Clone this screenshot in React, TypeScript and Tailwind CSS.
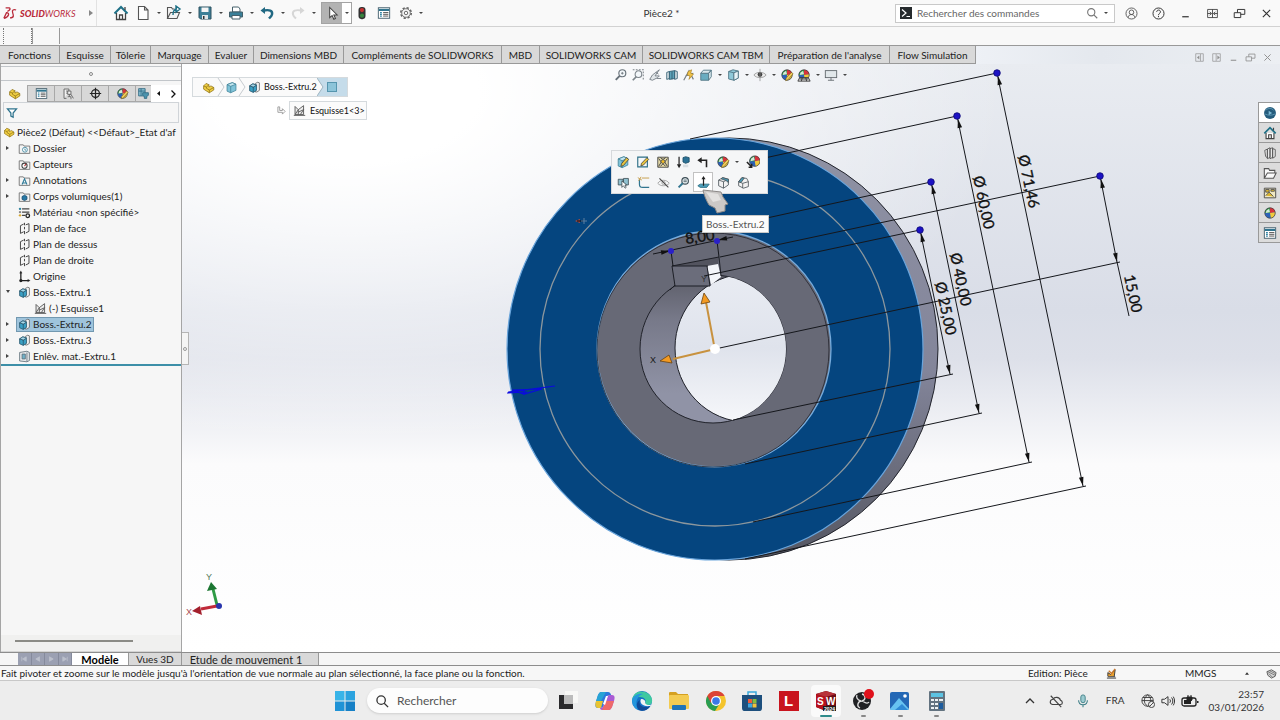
import React from "react";

type IconProps = { name: string; className?: string };

const sphere = (
  <g>
    <circle cx="8" cy="8" r="6" fill="#2c62b8" />
    <path d="M8 8V2a6 6 0 0 0-6 6z" fill="#2d8f3c" />
    <path d="M8 8V2a6 6 0 0 1 6 5z" fill="#d8323a" />
    <path d="M8 8l6-1a6 6 0 0 1-5 7z" fill="#f1c93b" />
    <path d="M4 5l3-2 1 4-5 1z" fill="#fff" opacity=".8" />
    <circle cx="8" cy="8" r="6" fill="none" stroke="#444" strokeWidth=".8" />
  </g>
);

const extrude = (
  <g stroke="#2b5a70" strokeWidth="1">
    <path d="M9 3l3-1.500 2 .8v9.200l-3 2H9z" fill="#f2f2f2" stroke="#666" />
    <path d="M2 6l4-2.500 4.500 1.500v6.500L6.500 14 2 12z" fill="#3aa0c4" />
    <path d="M2 6l4.500 1.500L10.500 5M6.500 7.500V14" fill="none" />
    <path d="M2 6l4-2.500 4.500 1.500-4 2.500z" fill="#a7d8e8" />
  </g>
);

const part = (
  <g stroke="#8a6d10" strokeWidth=".9">
    <path d="M2 6l3-3 3.500 1.500v3L11 6l3.500 2v3L9 14.500 2 10z" fill="#f0cf45" />
    <path d="M2 6l3.500 1.500L8.500 4.500M5.500 7.500V9l3.500 2 5.500-3M9 11v3.500" fill="none" />
  </g>
);

const cube = (
  <g stroke="#3d7f95" strokeWidth=".9">
    <path d="M2.500 4.500L9 2l4.500 2v7.500L7 14.500l-4.500-2z" fill="#7fc3d8" />
    <path d="M2.500 4.500L7 6.500 13.500 4 9 2z" fill="#c4e6ef" />
    <path d="M7 6.500v8" />
  </g>
);

const sketch = (
  <g fill="none" stroke="#555" strokeWidth="1.100">
    <path d="M2.500 13V3l4 4L13 2v11z" fill="#ececec" />
    <path d="M2.500 13l4-6v6M6.500 10l6.500-3M9 13l4-6M1 14h14" />
  </g>
);

const folder = <path d="M1.500 3.500h5l1 1.500h7v9h-13z" fill="#f4f4f4" stroke="#666" />;

const plane = <path d="M7 2.500l-4 2v9.500l4-2M9.500 3.500l4-1.500v9.500l-4 2M8 1v3M8 6v3M8 11v4" fill="none" stroke="#444" strokeWidth="1.200" />;

const listIcon = (
  <g>
    <rect x="1.500" y="2" width="13" height="12" fill="#fff" stroke="#3c5866" />
    <path d="M2 4.500h12" stroke="#31758f" strokeWidth="2.500" />
    <path d="M3.500 7.500h2M3.500 9.500h2M3.500 11.500h2" stroke="#2a7fa0" strokeWidth="1.300" />
    <path d="M7 7.500h6M7 9.500h6M7 11.500h6" stroke="#444" />
  </g>
);

const house = (
  <g strokeWidth="1.300">
    <path d="M3.500 8v6.500h9V8" fill="#fff" stroke="#444" />
    <path d="M1.500 8.500L8 2l6.500 6.500" fill="none" stroke="#1f7187" strokeWidth="2" />
    <path d="M6.500 14.500V10h3v4.500M12 2v3" fill="none" stroke="#444" />
  </g>
);

const drawings: Record<string, React.ReactNode> = {
  house,
  list: listIcon,
  sphere,
  extrude,
  part,
  cube,
  sketch,
  plane,
  newDoc: <path d="M3.500 1.500h6l3.500 3.500v9.500H3.500zM9.500 1.500V5H13" fill="#fff" stroke="#555" strokeWidth="1.100" />,
  open: (
    <g fill="#f4f4f4" stroke="#555" strokeWidth="1.100">
      <path d="M1.500 13.500v-11h4l1 1.500h2M1.500 13.500l3-6h9l-2.500 6z" />
      <path d="M7 10c0-4 1-6 4-6m-1-3l4 3-4 3z" fill="none" stroke="#1f7187" strokeWidth="1.400" />
    </g>
  ),
  save: (
    <g>
      <path d="M2 2h12v12H3.500L2 12.500z" fill="#3c7f97" stroke="#2e5361" />
      <path d="M4.500 2.500h7V7h-7z" fill="#f5f5f5" />
      <path d="M5 10h6v4H5z" fill="#dfe5e8" />
      <path d="M6 11h1.500v3H6z" fill="#333" />
    </g>
  ),
  print: (
    <g stroke="#45606b">
      <path d="M4.500 7V2h6L12 4v3z" fill="#fff" />
      <path d="M1.500 7h13v5h-13z" fill="#398099" />
      <path d="M4 10.500h8V14H4z" fill="#fff" />
    </g>
  ),
  undo: (
    <g>
      <path d="M1.500 5.500L6 2v7z" fill="#226983" />
      <path d="M5 5.500c5-1 9 0 8 4-.5 2-2 3-3 4" fill="none" stroke="#226983" strokeWidth="2.400" />
    </g>
  ),
  redo: (
    <g>
      <path d="M14.500 5.500L10 2v7z" fill="#d6d6d6" />
      <path d="M11 5.500c-5-1-9 0-8 4 .5 2 2 3 3 4" fill="none" stroke="#d6d6d6" strokeWidth="2" />
    </g>
  ),
  arrow: <path d="M5 1.500v11l2.600-2.300 1.800 4 1.800-.9-1.800-3.800H13z" fill="#fff" stroke="#444" strokeWidth="1.100" />,
  light: (
    <g>
      <rect x="4" y="1" width="8" height="14" rx="3.500" fill="#333" />
      <circle cx="8" cy="4.700" r="2.400" fill="#c93232" />
      <circle cx="8" cy="11" r="2.400" fill="#37843d" />
    </g>
  ),
  gear: (
    <g fill="none" stroke="#666">
      <circle cx="8" cy="8" r="6" strokeWidth="1.800" strokeDasharray="2.600 2.100" />
      <circle cx="8" cy="8" r="4.900" strokeWidth="1" />
      <circle cx="8" cy="8" r="2" strokeWidth="1.100" />
    </g>
  ),
  config: (
    <g fill="#f2f2f2" stroke="#555">
      <path d="M2.500 14V2.500h6v3M2.500 14h3M5 5h3M5 7.500h2" />
      <path d="M7 5h4v4H7zM9 9v3M7 12h4v3M11 9l3 5" />
    </g>
  ),
  target: (
    <g fill="none" stroke="#222" strokeWidth="1.500">
      <circle cx="8" cy="8" r="4.800" />
      <path d="M8 1v14M1 8h14" />
    </g>
  ),
  cam: (
    <g stroke="#2d6880" fill="#86bdd0">
      <path d="M2 2h8v9H2zM2 5h8M5 2v9" />
      <path d="M7 7h7v3l-2 2v2H9v-2L7 10z" fill="#4c93ad" />
    </g>
  ),
  filter: <path d="M2 2.500h12L9.500 8v5.500l-3-1.500V8z" fill="#fff" stroke="#31758f" strokeWidth="1.700" />,
  history: (
    <g>
      {folder}
      <circle cx="8.500" cy="9.500" r="3" fill="#fff" stroke="#35809a" />
      <path d="M8.500 8v2H10" fill="none" stroke="#35809a" />
    </g>
  ),
  sensor: (
    <g>
      {folder}
      <circle cx="8" cy="9.500" r="3.200" fill="#fff" stroke="#444" strokeWidth="1.300" />
      <path d="M8 10l2-3" stroke="#b03030" strokeWidth="1.300" />
    </g>
  ),
  note: (
    <g>
      {folder}
      <path d="M5 13l3-7 3 7M6 11h4" fill="none" stroke="#2a7896" strokeWidth="1.300" />
    </g>
  ),
  bodies: (
    <g>
      {folder}
      <path d="M5 8l3-1.500L11 8v3.500L8 13l-3-1.500z" fill="#2879a5" stroke="#174b70" />
    </g>
  ),
  material: (
    <g>
      <path d="M5 3.500h9M5 7.500h9M5 11.500h4" stroke="#444" strokeWidth="1.500" />
      <circle cx="2.500" cy="3.500" r="1.500" fill="#3185a0" />
      <circle cx="2.500" cy="7.500" r="1.500" fill="#888" />
      <circle cx="2.500" cy="11.500" r="1.500" fill="#d7a72f" />
      <circle cx="12" cy="12" r="2.200" fill="none" stroke="#222" strokeWidth="1.600" />
    </g>
  ),
  origin: (
    <g fill="#222" stroke="#222" strokeWidth="1.600">
      <path d="M3.500 3v10H13" fill="none" />
      <path d="M3.500 1L5 4H2zM15 13l-3-1.500v3z" strokeWidth=".3" />
      <circle cx="3.500" cy="13" r="1.200" />
    </g>
  ),
  cut: (
    <g stroke="#5d6d76">
      <path d="M2 3l9-1.500 3 1.500v10l-3 1.500-9-1z" fill="#e6e9eb" />
      <path d="M11 3v11M5 5h4v6H5z" fill="#6fb2c9" />
    </g>
  ),
  zoomFit: (
    <g fill="none" stroke="#667078" strokeWidth="1.300">
      <circle cx="9.500" cy="6" r="4" fill="#f3f7fa" />
      <path d="M6.500 9L2 13.500" strokeWidth="2.200" />
      <path d="M8 6h3M9.500 4.500v3" strokeWidth=".9" />
    </g>
  ),
  zoomArea: (
    <g fill="none" stroke="#7c848a" strokeWidth="1.200">
      <path d="M2 2h12v12" strokeDasharray="2 1.500" />
      <circle cx="8.500" cy="7" r="3.800" fill="#f3f7fa" />
      <path d="M6 10l-4 4" strokeWidth="2" />
    </g>
  ),
  prev: <path d="M13 2L5 8l-3 5 3 1 6-3 2-2H8zM10 12h5M9 5l3 2" fill="#e1e6e9" stroke="#727b82" />,
  section: (
    <g stroke="#315d70">
      <path d="M2 5l3-1v8l-3 1zM11 3l3 1v8l-3 1z" fill="#dfe7eb" />
      <path d="M5 4l6-1v9l-6 1z" fill="#5ea4ba" />
      <path d="M8 4v9" />
    </g>
  ),
  annot: (
    <g strokeWidth="1.300" fill="none">
      <path d="M2 14L8 3l5 10M4 9l9-3" stroke="#747c82" />
      <path d="M7 4l4-2-1 4 3 1-5 6 1-4-3-1z" fill="#efc34b" stroke="#a47c1c" strokeWidth=".7" />
    </g>
  ),
  orient: (
    <g stroke="#4f7583">
      <path d="M2 6h9v8H2z" fill="#69acc0" />
      <path d="M2 6l3-3.500h9L11 6zM11 6l3-3.500V10l-3 4z" fill="#dbe9ee" />
    </g>
  ),
  style: (
    <g stroke="#4f7583">
      <path d="M3 4l5-2 6 1.500v8L9 14l-6-1.500z" fill="#8fc9d9" />
      <path d="M3 4l6 1.500V14M9 5.500l5-2" fill="none" />
      <path d="M9 5.500l5-2v8L9 14z" fill="#e7f3f7" />
    </g>
  ),
  eye: (
    <g>
      <path d="M1 8c3-4 11-4 14 0-3 4-11 4-14 0z" fill="#eee" stroke="#999" />
      <circle cx="8" cy="7.500" r="2.700" fill="#444" />
      <path d="M8 1v14" stroke="#888" strokeWidth=".8" />
    </g>
  ),
  appearance: (
    <g>
      {sphere}
      <path d="M13 5l2 1.500-6 7-2.500 1 .5-3z" fill="#f0cd5d" stroke="#765d19" strokeWidth=".7" />
    </g>
  ),
  scene: (
    <g>
      {sphere}
      <path d="M1 15l2-4h10l2 4z" fill="#d9d9d9" stroke="#333" />
      <path d="M3 12.500h10M6 11l-1 4M10 11l1 4" stroke="#333" />
    </g>
  ),
  screen: (
    <g stroke="#5f666a">
      <rect x="1.500" y="3" width="13" height="8" fill="#e1e7ea" />
      <path d="M8 11v3M4.500 14h7" />
    </g>
  ),
  editFeature: (
    <g>
      {cube}
      <path d="M12 3l2.500 2-6 7-3 1 .8-3z" fill="#e8c33e" stroke="#333" strokeWidth=".8" />
    </g>
  ),
  editSketch: (
    <g>
      <path d="M2 2.500h11v11H2z" fill="#f4f7f8" stroke="#2c6f87" strokeWidth="1.300" />
      <path d="M12.500 3l2 2-6 6.500-3 1 .8-3z" fill="#e8c33e" stroke="#333" strokeWidth=".8" />
    </g>
  ),
  suppress: (
    <g>
      <path d="M2 2.500h12v11.500H2z" fill="#e7dba8" stroke="#444" />
      <path d="M3 4l3 4-3 5M13 4l-3 4 3 5M5 3l3 2 3-2M5 13l3-3 3 3" fill="none" stroke="#444" strokeWidth="1.100" />
      <circle cx="8" cy="7.500" r="2.200" fill="#f2bd24" stroke="#555" />
    </g>
  ),
  down: (
    <g>
      <path d="M3.500 2v9" stroke="#222" strokeWidth="1.400" />
      <path d="M1 10.500h5L3.500 15z" fill="#222" />
      <path d="M8 3l3-1 4 1v5l-4 1.500L8 8z" fill="#2b7195" stroke="#1d4f69" />
      <path d="M8 11h6v3H8z" fill="#d8dee2" />
    </g>
  ),
  back: (
    <g>
      <path d="M5 6h7v8" fill="none" stroke="#222" strokeWidth="1.800" />
      <path d="M1.500 6L6.500 2.500v7z" fill="#222" />
    </g>
  ),
  copyLook: (
    <g>
      <g transform="translate(2 -1)">{sphere}</g>
      <path d="M1 8l5 5M6.500 10v4H3" stroke="#222" fill="none" strokeWidth="1.700" />
    </g>
  ),
  pick: (
    <g stroke="#3e4d54">
      <path d="M1.500 4h6v7h-6zM8 3h6v8H8z" fill="#8fc1d0" />
      <path d="M6 6v8l2-2 2 3 1.300-1-1.500-3H12z" fill="#fff" />
    </g>
  ),
  fillet: (
    <g fill="none">
      <path d="M3 4v6c0 3 2 4 4 4h8" stroke="#31758f" strokeWidth="1.500" />
      <path d="M1 2l5 3M5 1L2 6M6 2.500h9" stroke="#c9a050" strokeWidth="1.200" />
    </g>
  ),
  hide: (
    <g fill="none" stroke="#9a9a9a">
      <path d="M1 9c3-5 11-5 14 0-3 4-11 4-14 0z" />
      <circle cx="8" cy="8.500" r="2" />
      <path d="M3 3l11 11" stroke="#444" strokeWidth="1.300" />
    </g>
  ),
  zoomSel: (
    <g fill="none" stroke="#3b4b53" strokeWidth="1.400">
      <circle cx="10" cy="6" r="4" fill="#eef7fa" />
      <path d="M7 9l-5 5" stroke="#31758f" strokeWidth="2.400" />
      <path d="M8 5h4M8 7h4" strokeWidth="1" />
    </g>
  ),
  normal: (
    <g>
      <path d="M1 12l3-2h11l-3 4H4z" fill="#4c9fba" stroke="#266a80" />
      <path d="M8 12V3" stroke="#222" strokeWidth="1.500" />
      <path d="M8 0l2.500 4h-5z" fill="#222" />
    </g>
  ),
  box1: (
    <g stroke="#4a5357">
      <path d="M2 5l5-3 7 2v7l-6 4-6-3z" fill="#f2f2f2" />
      <path d="M2 5l6 2 6-3M8 7v8" fill="none" />
      <path d="M5 3.500L7 2l7 2v4l-3-2.500z" fill="#4b9db9" />
    </g>
  ),
  box2: (
    <g stroke="#4a5357">
      <path d="M2 7l4-5 6 1 2 4v6l-6 2-6-3z" fill="#f2f2f2" />
      <path d="M2 7l5 2 7-2M7 9v6" fill="none" />
      <path d="M6 2L2 7l3 1 4-5.500z" fill="#4b9db9" />
    </g>
  ),
  globe: (
    <g>
      <circle cx="8" cy="8" r="6.800" fill="#255c7c" />
      <path d="M3 5c3-3 7-3 9 0M2 9c4 2 8 2 12 0" fill="none" stroke="#6ba6c4" strokeWidth=".8" />
      <path d="M6.500 5.500l4 2.500-4 2.500z" fill="#7fbbd6" />
    </g>
  ),
  books: (
    <g fill="#e9e9e9" stroke="#555">
      <path d="M2 5l3-1.500v10L3 12zM5 3.500L8 2v11l-3 1.500zM8 3l3-1v11l-3 1.500zM11 3l3 1v8l-3 2z" />
    </g>
  ),
  folderOpen: <path d="M1.500 14V3h5l1 2h6v3M1.500 14l3.500-6h10l-3 6z" fill="#fafafa" stroke="#555" strokeWidth="1.200" />,
  palette: (
    <g>
      <path d="M1.500 2.500h13v11h-13z" fill="#efe8c2" stroke="#444" />
      <path d="M3 4h4v3H3zM9 4h4v2H9zM3 11l4-4 5 5" fill="#d9b32e" stroke="#555" />
    </g>
  ),
  user: (
    <g fill="none" stroke="#444">
      <circle cx="8" cy="8" r="6.800" />
      <circle cx="8" cy="6.500" r="2.800" />
      <path d="M4 13c0-5 8-5 8 0" />
    </g>
  ),
  help: (
    <g fill="none" stroke="#333" strokeWidth="1.200">
      <circle cx="8" cy="8" r="6.800" />
      <path d="M5.800 6c0-3 4.600-3 4.600 0 0 2-2.400 1.800-2.400 4M8 11v1.500" />
    </g>
  ),
  min: <path d="M4 12h8" stroke="currentColor" strokeWidth="1.500" />,
  span: <path d="M2 3h12v10H2zM8 3v10M2 8h4M10 8h4M4.500 6L7 8l-2.500 2M11.500 6L9 8l2.500 2" fill="none" stroke="currentColor" />,
  restore: <path d="M1.500 7h8v6h-8zM5.500 7V3h9v6h-5" fill="none" stroke="currentColor" strokeWidth="1.200" />,
  close: <path d="M3.500 3.500l9 9M12.500 3.500l-9 9" stroke="currentColor" strokeWidth="1.400" />,
  dockL: (
    <g fill="none" stroke="currentColor">
      <path d="M2.500 2.500h11v11h-11zM9.500 3v10" />
      <path d="M7.500 5.500v5L4.500 8z" fill="currentColor" strokeWidth=".5" />
    </g>
  ),
  dockR: (
    <g fill="none" stroke="currentColor">
      <path d="M2.500 2.500h11v11h-11zM7.500 3v10" />
      <path d="M9.500 5.500v5l3-2.500z" fill="currentColor" strokeWidth=".5" />
    </g>
  ),
  search: (
    <g fill="none" stroke="currentColor" strokeWidth="1.500">
      <circle cx="7" cy="7" r="4.800" />
      <path d="M10.500 10.500L15 15" />
    </g>
  ),
};

function Icon({ name, className = "size-4" }: IconProps) {
  return (
    <svg viewBox="0 0 16 16" className={`${className} shrink-0`} aria-hidden="true">
      {drawings[name]}
    </svg>
  );
}

function Caret({ className = "w-[15px]" }: { className?: string }) {
  return (
    <span className={`flex items-center justify-center ${className}`}>
      <svg viewBox="0 0 4 2" className="h-[2px] w-1" aria-hidden="true">
        <path d="M0 0h4L2 2z" fill="#444" />
      </svg>
    </span>
  );
}

function TitleBar() {
  const menus: [string, string][] = [
    ["newDoc", "Nouveau"],
    ["open", "Ouvrir"],
    ["save", "Enregistrer"],
    ["print", "Imprimer"],
    ["undo", "Annuler"],
    ["redo", "Rétablir"],
  ];
  const win: [string, string][] = [
    ["user", "Connexion"],
    ["help", "Aide"],
    ["min", "Réduire"],
    ["span", "Étendre"],
    ["restore", "Restaurer"],
    ["close", "Fermer"],
  ];
  return (
    <header className="flex h-[27px] shrink-0 items-center border-b border-[#d2d2d2] bg-[#f9f9f9]">
      <div className="flex w-[97px] items-center self-stretch border-r border-[#e2e2e2] pl-[3px] text-[#b92b3b]">
        <svg viewBox="0 0 16 16" className="h-[15px] w-[14px]" aria-hidden="true">
          <path d="M3 1.500h4c2 .5 1 3-2 4M1 13.500L4 7c4 0 3 5-3 6.500M15 4c-3-1-5 0-4 3s2 6-3 6" fill="none" stroke="currentColor" strokeWidth="1.500" />
        </svg>
        <span className="ml-[3px] text-[9px] italic leading-none">
          <b className="font-black">SOLID</b>WORKS
        </span>
        <svg viewBox="0 0 4 6" className="ml-auto mr-[3px] h-[6px] w-1" aria-hidden="true">
          <path d="M0 0v6l4-3z" fill="#888" />
        </svg>
      </div>
      <nav className="flex items-center pl-4" aria-label="Accès rapide">
        <button aria-label="Accueil" className="mr-[6px] flex">
          <Icon name="house" />
        </button>
        {menus.map(([icon, label]) => (
          <button key={icon} aria-label={label} className="flex">
            <Icon name={icon} />
            <Caret />
          </button>
        ))}
        <button aria-label="Sélectionner" className="flex h-[22px] border border-[#a3a3a3] bg-white">
          <span className="flex w-5 items-center justify-center bg-[#b3b3b3]">
            <Icon name="arrow" className="size-[15px]" />
          </span>
          <Caret className="w-[9px]" />
        </button>
        <button aria-label="Reconstruire" className="ml-[3px]">
          <Icon name="light" className="size-[14px]" />
        </button>
        <button aria-label="Propriétés" className="ml-2">
          <Icon name="list" className="size-[14px]" />
        </button>
        <button aria-label="Options" className="ml-2 flex">
          <Icon name="gear" className="size-[14px]" />
          <Caret />
        </button>
      </nav>
      <h1 className="flex-1 text-center text-[10px] text-[#333]">Pièce2 *</h1>
      <label className="flex h-[19px] w-[220px] items-center border border-[#c9c9c9] bg-white pl-1">
        <svg viewBox="0 0 12 12" className="size-3" aria-hidden="true">
          <rect width="12" height="12" fill="#262b2e" />
          <path d="M2 2.500L6 6 2 9.500M6.500 9.500H10" fill="none" stroke="#fff" strokeWidth="1.200" />
        </svg>
        <input
          aria-label="Rechercher des commandes"
          placeholder="Rechercher des commandes"
          className="ml-[5px] min-w-0 flex-1 bg-transparent text-[10px] outline-none placeholder:text-[#666]"
        />
        <span className="text-[#777]">
          <Icon name="search" className="size-3" />
        </span>
        <Caret className="w-4" />
      </label>
      <div className="flex pl-[3px] text-[#333]">
        {win.map(([icon, label]) => (
          <button key={icon} aria-label={label} className="flex w-[27px] justify-center">
            <Icon name={icon} className="size-[13px]" />
          </button>
        ))}
      </div>
    </header>
  );
}

function RibbonTabs() {
  const tabs: [string, string][] = [
    ["Fonctions", "w-[60px]"],
    ["Esquisse", "w-[51px]"],
    ["Tôlerie", "w-[40px]"],
    ["Marquage", "w-[58px]"],
    ["Evaluer", "w-[45px]"],
    ["Dimensions MBD", "w-[90px]"],
    ["Compléments de SOLIDWORKS", "w-[158px]"],
    ["MBD", "w-[38px]"],
    ["SOLIDWORKS CAM", "w-[103px]"],
    ["SOLIDWORKS CAM TBM", "w-[127px]"],
    ["Préparation de l'analyse", "w-[120px]"],
    ["Flow Simulation", "w-[86px]"],
  ];
  const controls: [string, string][] = [
    ["dockL", "Volet gauche"],
    ["dockR", "Volet droit"],
    ["min", "Réduire le document"],
    ["restore", "Restaurer le document"],
    ["close", "Fermer le document"],
  ];
  return (
    <div className="flex h-[19px] shrink-0 border-t border-[#999] bg-[linear-gradient(90deg,#eef1f6_76%,#e4e8ee_86%,#eceff3)]">
      {tabs.map(([label, width]) => (
        <button key={label} className={`${width} h-[18px] shrink-0 whitespace-nowrap border-b border-r border-[#999] bg-[#d9d9d9] text-[10px] leading-none text-[#222]`}>
          {label}
        </button>
      ))}
      <div className="ml-auto flex items-center pr-1 pt-1 text-[#8f8f8f]">
        {controls.map(([icon, label]) => (
          <button key={icon} aria-label={label} className="flex w-[17px] justify-center">
            <Icon name={icon} className="size-[11px]" />
          </button>
        ))}
      </div>
    </div>
  );
}

type Node = { icon: string; label: string; arrow?: "right" | "down"; nested?: boolean; selected?: boolean };

const tree: Node[] = [
  { icon: "history", label: "Dossier", arrow: "right" },
  { icon: "sensor", label: "Capteurs" },
  { icon: "note", label: "Annotations", arrow: "right" },
  { icon: "bodies", label: "Corps volumiques(1)", arrow: "right" },
  { icon: "material", label: "Matériau <non spécifié>" },
  { icon: "plane", label: "Plan de face" },
  { icon: "plane", label: "Plan de dessus" },
  { icon: "plane", label: "Plan de droite" },
  { icon: "origin", label: "Origine" },
  { icon: "extrude", label: "Boss.-Extru.1", arrow: "down" },
  { icon: "sketch", label: "(-) Esquisse1", nested: true },
  { icon: "extrude", label: "Boss.-Extru.2", arrow: "right", selected: true },
  { icon: "extrude", label: "Boss.-Extru.3", arrow: "right" },
  { icon: "cut", label: "Enlèv. mat.-Extru.1", arrow: "right" },
];

function FeaturePanel() {
  const tabs = ["part", "list", "config", "target", "appearance"];
  const names = ["Arbre", "Propriétés", "Configurations", "Cotes", "Apparences"];
  return (
    <aside className="flex w-[182px] shrink-0 flex-col border-l border-r border-[#a5a5a5] bg-[#f6f6f6]">
      <div className="mt-[2px] flex h-[15px] items-center justify-center border-b border-t border-[#c2c6ca]">
        <span className="size-1 rounded-full border border-[#888]" />
      </div>
      <div className="mt-1 flex h-[17px]">
        {tabs.map((icon, i) => (
          <button
            key={icon}
            aria-label={names[i]}
            className={`flex w-[27px] shrink-0 items-center justify-center border-r border-[#a8a8a8] ${i === 0 ? "" : "border-b border-t bg-[#d8d8d8]"}`}
          >
            <Icon name={icon} className="size-[13px]" />
          </button>
        ))}
        <button aria-label="CAM" className="flex w-[15px] shrink-0 items-center justify-center overflow-hidden border-b border-t border-[#a8a8a8] bg-[#d8d8d8]">
          <Icon name="cam" className="size-[13px]" />
        </button>
        <button aria-label="Onglets précédents" className="flex flex-1 items-center justify-center bg-white">
          <svg viewBox="0 0 3 5" className="h-[5px] w-[3px]" aria-hidden="true">
            <path d="M3 0v5L0 2.500z" fill="#111" />
          </svg>
        </button>
        <button aria-label="Onglets suivants" className="flex flex-1 items-center justify-center bg-white">
          <svg viewBox="0 0 5 8" className="h-2 w-[5px]" aria-hidden="true">
            <path d="M.5.500L4 4 .5 7.500" fill="none" stroke="#111" strokeWidth="1.300" />
          </svg>
        </button>
      </div>
      <label className="mx-[2px] flex h-[21px] items-center border border-[#d0d4d8] pl-[2px]">
        <Icon name="filter" className="size-3" />
        <input aria-label="Filtrer l'arbre" className="min-w-0 flex-1 bg-transparent text-[10px] outline-none" />
      </label>
      <div className="pt-px text-[10px] text-[#222]">
        <button className="flex h-4 items-center whitespace-nowrap pl-[2px]">
          <Icon name="part" className="mr-[2px] size-3" />
          Pièce2 (Défaut) &lt;&lt;Défaut&gt;_Etat d'af
        </button>
        <ul>
          {tree.map((n) => (
            <li key={n.label} className={`flex h-4 items-center ${n.nested ? "pl-4" : ""}`}>
              <span className="flex w-[15px] pl-[5px]">
                {n.arrow && (
                  <svg viewBox="0 0 4 4" className="size-1" aria-hidden="true">
                    <path d={n.arrow === "right" ? "M0 0v4l3-2z" : "M0 0h4L2 3z"} fill="#444" />
                  </svg>
                )}
              </span>
              <button
                className={`flex h-[15px] items-center gap-[2px] whitespace-nowrap border px-px ${n.selected ? "border-[#7298b0] bg-[#9fc4dc]" : "border-transparent"}`}
              >
                <Icon name={n.icon} className="size-[13px]" />
                {n.label}
              </button>
            </li>
          ))}
        </ul>
      </div>
      <div className="h-[2px] w-full bg-[#3d8fa8]" />
      <div className="mt-auto border-b border-[#d4d4d4] bg-[#f0f0ef] pb-[9px] pt-[5px]">
        <div className="ml-[14px] h-[2px] w-[118px] bg-[#8b8b86]" />
      </div>
    </aside>
  );
}

type Pt = [number, number];

function ArrowHead({ tip, from }: { tip: Pt; from: Pt }) {
  const angle = (Math.atan2(tip[1] - from[1], tip[0] - from[0]) * 180) / Math.PI;
  return <path d="M0 0L-9-2.300v4.600z" transform={`translate(${tip[0]} ${tip[1]}) rotate(${angle})`} fill="#111" />;
}

const witness: [Pt, Pt][] = [
  [[690, 139], [997, 73]],
  [[745, 559], [1086, 486]],
  [[760, 159], [957, 116]],
  [[753, 522], [1032, 462]],
  [[735, 225], [931, 182]],
  [[745, 464], [982, 413]],
  [[704, 276], [920, 230]],
  [[733, 420], [953, 374]],
  [[720, 257], [1100, 176]],
  [[715, 349], [1120, 262]],
];

const dims: { a: Pt; b: Pt; text: string; at: Pt }[] = [
  { a: [997, 73], b: [1083, 486], text: "Ø 71,46", at: [1018, 156] },
  { a: [957, 116], b: [1029, 462], text: "Ø 60,00", at: [973, 177] },
  { a: [931, 182], b: [979, 413], text: "Ø 40,00", at: [950, 254] },
  { a: [920, 230], b: [950, 374], text: "Ø 25,00", at: [935, 283] },
  { a: [1100, 176], b: [1117, 262], text: "15,00", at: [1124, 276] },
];

function Model() {
  return (
    <svg viewBox="182 64 1098 588" className="absolute inset-0 h-full w-full" role="img" aria-label="Pièce avec cotes">
      <defs>
        <linearGradient id="rim" x1="0" y1="0" x2="0" y2="1">
          <stop offset="0" stopColor="#8f92a4" />
          <stop offset=".55" stopColor="#83859a" />
          <stop offset="1" stopColor="#555762" />
        </linearGradient>
        <linearGradient id="bore" x1="0" y1="0" x2="0" y2="1">
          <stop offset="0" stopColor="#5c5d68" />
          <stop offset=".3" stopColor="#777989" />
          <stop offset=".8" stopColor="#9093a6" />
        </linearGradient>
        <linearGradient id="hole" x1="0" y1="0" x2="0" y2="1">
          <stop offset="0" stopColor="#e9ecf3" />
          <stop offset=".5" stopColor="#dfe3ec" />
          <stop offset="1" stopColor="#f6f7fa" />
        </linearGradient>
        <clipPath id="boreClip">
          <ellipse cx="713" cy="349" rx="73" ry="74" />
        </clipPath>
      </defs>

      <ellipse cx="729" cy="349" rx="209" ry="211" fill="url(#rim)" stroke="#22242c" strokeWidth="1" />
      <ellipse cx="715" cy="349" rx="208" ry="211" fill="#05457f" stroke="#6aa5dc" strokeWidth="1.200" />
      <ellipse cx="715" cy="349" rx="175" ry="177" fill="none" stroke="#8d979d" strokeWidth="1.300" />
      <ellipse cx="714" cy="349" rx="117" ry="118" fill="#676976" stroke="#76abdc" strokeWidth="1.300" />
      <ellipse cx="713" cy="350" rx="116" ry="117" fill="none" stroke="#23252d" strokeWidth=".8" />
      <ellipse cx="713" cy="349" rx="73" ry="74" fill="url(#bore)" stroke="#20222a" strokeWidth="1" />
      <g clipPath="url(#boreClip)">
        <ellipse cx="747" cy="348" rx="72" ry="74" fill="url(#hole)" stroke="#20222a" strokeWidth="1" />
      </g>
      <path d="M675 286l-3-20 47-9 2 19-11 10z" fill="#6b6d7b" />
      <path d="M672 266l47-9-1 8-10 1z" fill="#53545f" />
      <path d="M707 266l11-2 3 13-10 8z" fill="#f4f6fa" />
      <path d="M675 286l-3-20 47-9 2 19M672 266h36M675 286h35l-3-20M675 285l-5 5" fill="none" stroke="#1d1f26" strokeWidth="1" />

      <g stroke="#15171c" strokeWidth="1">
        {witness.map(([a, b], i) => (
          <line key={i} x1={a[0]} y1={a[1]} x2={b[0]} y2={b[1]} />
        ))}
        {dims.map((d) => (
          <line key={d.text} x1={d.a[0]} y1={d.a[1]} x2={d.b[0]} y2={d.b[1]} />
        ))}
        <path d="M1117 262l12 54M653 254l80-17M671 251l2 15M717 241l2 16" fill="none" />
      </g>
      {dims.map((d) => (
        <g key={d.text}>
          <ArrowHead tip={[d.a[0] + 1, d.a[1] + 3]} from={d.b} />
          <ArrowHead tip={d.b} from={d.a} />
          <circle cx={d.a[0]} cy={d.a[1]} r="3.300" fill="#1c12c4" stroke="#0b0875" strokeWidth=".8" />
          <text
            transform={`translate(${d.at[0]} ${d.at[1]}) rotate(78)`}
            className="font-['Lato',sans-serif] text-[15px]"
            fill="#111"
            stroke="#111"
            strokeWidth=".35"
          >
            {d.text}
          </text>
        </g>
      ))}
      <ArrowHead tip={[670, 251]} from={[653, 254]} />
      <ArrowHead tip={[718, 240]} from={[733, 237]} />
      <g fill="#2a20c8">
        <circle cx="671" cy="251" r="3" />
        <circle cx="717" cy="241" r="3" />
      </g>
      <text transform="translate(686 244) rotate(-8)" className="font-['Lato',sans-serif] text-[15px]" fill="#111" stroke="#111" strokeWidth=".35">
        8,00
      </text>

      <g strokeWidth="2" stroke="#c8923f">
        <path d="M714 345l-8-43" />
        <path d="M711 350l-38 9" />
        <path d="M704 293l-3 11 9-2z" fill="#f39a22" stroke="#6a4310" strokeWidth=".8" />
        <path d="M660 361l12 2-3-8z" fill="#f39a22" stroke="#6a4310" strokeWidth=".8" />
      </g>
      <circle cx="715" cy="349" r="5" fill="#fff" />
      <text x="650" y="363" className="font-['Liberation_Sans',sans-serif] text-[9px]" fill="#161616">X</text>
      <text x="701" y="282" className="font-['Liberation_Sans',sans-serif] text-[9px]" fill="#333">Y</text>

      <path d="M508 392l47-6M512 390l30-1-18 5zM507 393l20-1M524 390v5" fill="none" stroke="#0a0ae0" strokeWidth="1.200" />
      <path d="M575 221l5-2v4z" fill="#b94a36" />
      <path d="M577 221h6" stroke="#0d1522" strokeWidth="1.200" />
      <path d="M581 221h6M584 218v6" stroke="#5d7f9f" strokeWidth="1" />

      <g strokeWidth="3">
        <path d="M217 605l-4-16" stroke="#2f9b45" />
        <path d="M211 582l-4 9 10-2z" fill="#1c7632" />
        <path d="M217 606l-16 3" stroke="#c02a3a" />
        <path d="M192 611l10 4-2-9z" fill="#a31f2c" />
        <circle cx="219" cy="606" r="3" fill="#2936ad" />
      </g>
      <text x="206" y="580" className="font-['Liberation_Sans',sans-serif] text-[9px]" fill="#557a5a">Y</text>
      <text x="186" y="615" className="font-['Liberation_Sans',sans-serif] text-[9px]" fill="#a84a52">X</text>
    </svg>
  );
}

function ViewToolbar() {
  const items: [string, string, boolean][] = [
    ["zoomFit", "Zoom au mieux", false],
    ["zoomArea", "Zoom fenêtre", false],
    ["prev", "Vue précédente", false],
    ["section", "Vue en coupe", false],
    ["annot", "Vues d'annotation", false],
    ["orient", "Orientation", true],
    ["style", "Style d'affichage", true],
    ["eye", "Cacher/Montrer", true],
    ["appearance", "Apparence", false],
    ["scene", "Scène", true],
    ["screen", "Paramètres", true],
  ];
  return (
    <div className="absolute inset-x-0 top-1 flex justify-center">
      {items.map(([icon, label, menu]) => (
        <button key={icon} aria-label={label} className="flex">
          <span className="flex w-[17px] justify-center">
            <Icon name={icon} className="size-[14px]" />
          </span>
          {menu && <Caret className="w-[10px]" />}
        </button>
      ))}
    </div>
  );
}

function ContextToolbar() {
  const top: [string, string][] = [
    ["editFeature", "Editer la fonction"],
    ["editSketch", "Editer l'esquisse"],
    ["suppress", "Supprimer"],
    ["down", "Reprendre"],
    ["back", "Retour"],
    ["appearance", "Apparences"],
  ];
  const bottom: [string, string][] = [
    ["pick", "Sélectionner autre"],
    ["fillet", "Esquisse"],
    ["hide", "Cacher"],
    ["zoomSel", "Zoom sur la sélection"],
    ["normal", "Normal à"],
    ["box1", "Congé"],
    ["box2", "Chanfrein"],
  ];
  return (
    <div className="absolute left-[429px] top-[86px] flex h-11 w-[157px] flex-col justify-center border border-[#d6d9dc] bg-[#f5f6f7] pl-px">
      <div className="flex h-5 items-center">
        {top.map(([icon, label]) => (
          <button key={icon} aria-label={label} className="flex w-5 justify-center">
            <Icon name={icon} className="size-[14px]" />
          </button>
        ))}
        <Caret className="w-[8px]" />
        <button aria-label="Copier l'apparence" className="flex w-6 justify-center">
          <Icon name="copyLook" className="size-[14px]" />
        </button>
      </div>
      <div className="flex h-5 items-center">
        {bottom.map(([icon, label]) => (
          <button key={icon} aria-label={label} className={`flex h-5 w-5 items-center justify-center ${icon === "normal" ? "border border-[#c2c2c2] bg-white" : ""}`}>
            <Icon name={icon} className="size-[13px]" />
          </button>
        ))}
      </div>
    </div>
  );
}

function Breadcrumb() {
  const chevron = (
    <svg viewBox="0 0 8 18" className="h-[18px] w-2 shrink-0" aria-hidden="true">
      <path d="M1 0l6 9-6 9" fill="none" stroke="#c6cbd0" />
    </svg>
  );
  return (
    <div className="absolute left-[10px] top-[13px] text-[9px] text-[#111]">
      <div className="flex h-5 w-[156px] items-center border border-[#d5dadd] bg-[#fafafa] pl-[9px]">
        <Icon name="part" className="mr-[2px] size-[13px]" />
        {chevron}
        <Icon name="cube" className="size-[13px]" />
        {chevron}
        <Icon name="extrude" className="ml-[2px] size-[13px]" />
        <span className="flex-1 whitespace-nowrap pl-[3px]">Boss.-Extru.2</span>
        <span className="relative flex h-full w-8 items-center justify-center bg-[#c5dcea]">
          <svg viewBox="0 0 7 18" className="absolute left-0 top-0 h-[18px] w-[7px]" aria-hidden="true">
            <path d="M0 0l6 9-6 9z" fill="#fafafa" />
            <path d="M0 0l6 9-6 9" fill="none" stroke="#9fb4c0" />
          </svg>
          <span className="size-[10px] border border-[#5595ae] bg-[#8cc4d9]" />
        </span>
      </div>
      <div className="ml-[85px] mt-1 flex items-center gap-[3px]">
        <svg viewBox="0 0 10 10" className="size-[9px]" aria-hidden="true">
          <path d="M1 1h2v4h3V3l3 3-3 3V7H1z" fill="#fff" stroke="#999" />
        </svg>
        <span className="flex h-[19px] w-[78px] items-center gap-1 whitespace-nowrap border border-[#d5dadd] bg-[#fbfbfb] pl-[3px]">
          <Icon name="sketch" className="size-[13px]" />
          Esquisse1&lt;3&gt;
        </span>
      </div>
    </div>
  );
}

function Viewport() {
  const side: [string, string][] = [
    ["globe", "3DEXPERIENCE"],
    ["house", "Ressources"],
    ["books", "Bibliothèque"],
    ["folderOpen", "Explorateur"],
    ["palette", "Palette de vues"],
    ["sphere", "Apparences"],
    ["list", "Propriétés personnalisées"],
  ];
  return (
    <main className="relative min-w-0 flex-1 overflow-hidden bg-[radial-gradient(ellipse_60%_60%_at_15%_5%,#ffffff_20%,transparent),linear-gradient(180deg,#e9ecf1_0%,#d9dde7_42%,#dde0e9_50%,#fbfbfc_68%,#ffffff_100%)]">
      <Model />
      <ViewToolbar />
      <Breadcrumb />
      <ContextToolbar />
      <div role="tooltip" className="absolute left-[520px] top-[151px] border border-[#c8c8c8] bg-[#fcfcfc] px-[3px] text-[10px] leading-4 text-[#555]">
        Boss.-Extru.2
      </div>
      <svg viewBox="0 0 28 26" className="absolute left-[520px] top-[124px] h-[26px] w-7" aria-hidden="true">
        <path d="M1 2l18 2 2 5 5 7-3 1v6l-8 2-2-5-6-3C4 12 2 7 1 2z" fill="#cbc8c6" stroke="#8d8987" />
        <path d="M4 4l12 2 3 6-8 2z" fill="#e3e1df" />
      </svg>
      <button aria-label="Masquer l'arbre" className="absolute left-0 top-[268px] flex h-[33px] w-[7px] items-center justify-center border border-l-0 border-[#b5b5b5] bg-[#f5f5f5]">
        <span className="size-1 rounded-full border border-[#999]" />
      </button>
      <div className="absolute right-0 top-[38px] w-[22px] border-l border-t border-[#999]">
        {side.map(([icon, label], i) => (
          <button key={icon} aria-label={label} className={`flex h-5 w-full items-center justify-center border-b border-[#999] ${i === 0 ? "bg-white" : "bg-[#dcdcdc]"}`}>
            <Icon name={icon} className="size-[14px]" />
          </button>
        ))}
      </div>
    </main>
  );
}

function BottomTabs() {
  const nav = ["M2 1v6M8 1v6L3 4z", "M7 1v6L2 4z", "M3 1v6l5-3z", "M8 1v6M2 1v6l5-3z"];
  const names = ["Premier", "Précédent", "Suivant", "Dernier"];
  return (
    <div className="flex h-[14px] shrink-0 border-b border-t border-[#8d8d8d] bg-[#f6f6f6] text-[10px] leading-none text-[#222]">
      <div className="ml-[18px] flex w-[54px] bg-[#9ba0b2]">
        {nav.map((d, i) => (
          <button key={d} aria-label={names[i]} className="flex flex-1 items-center justify-center border-r border-[#858a9c]">
            <svg viewBox="0 0 10 8" className="h-[6px] w-2" aria-hidden="true">
              <path d={d} fill="#bcc0cc" stroke="#bcc0cc" />
            </svg>
          </button>
        ))}
      </div>
      <button className="w-[57px] border-r border-[#999] bg-white text-[11px] font-bold leading-none text-black">Modèle</button>
      <button className="w-[53px] border-r border-[#999] bg-[#d9d9d9]">Vues 3D</button>
      <button className="w-[137px] border-r border-[#999] bg-[#d9d9d9] pr-2 text-[11px] leading-none">Etude de mouvement 1</button>
    </div>
  );
}

function StatusBar() {
  return (
    <div className="flex h-[15px] shrink-0 items-center border-b border-[#c8c8c8] bg-[#f7f7f7] pl-px text-[10px] leading-none text-[#222]">
      <span className="flex-1 whitespace-nowrap">
        Fait pivoter et zoome sur le modèle jusqu'à l'orientation de vue normale au plan sélectionné, la face plane ou la fonction.
      </span>
      <span className="w-[78px]">Edition: Pièce</span>
      <svg viewBox="0 0 12 12" className="size-[11px]" aria-hidden="true">
        <path d="M1 11h10M2 9.500h8M2 9V5l3 2 5-5-1 7" fill="#e7a030" stroke="#333" />
        <path d="M3 3l3 3 4-5" fill="none" stroke="#c9772b" strokeWidth="1.500" />
      </svg>
      <span className="ml-[68px] w-[60px]">MMGS</span>
      <svg viewBox="0 0 6 4" className="h-[3px] w-1" aria-hidden="true">
        <path d="M0 4h6L3 0z" fill="#333" />
      </svg>
      <svg viewBox="0 0 12 12" className="ml-[17px] mr-[3px] size-[11px]" aria-hidden="true">
        <path d="M1 4l5-2 5 3-1 4-4 2-4-3z" fill="#d7d7d7" stroke="#555" />
        <path d="M2 4l8 4M4 3l6 3M3 6l4 4" stroke="#777" />
      </svg>
    </div>
  );
}

const apps: { label: string; art: React.ReactNode; state?: "active" | "open" }[] = [
  {
    label: "Vue des tâches",
    art: (
      <g>
        <path d="M9 2h13v12H9z" fill="#f8f8f6" />
        <path d="M3 6h14v14H3z" fill="#2a2a2c" />
        <path d="M8 6h9v9H8z" fill="#bcbcbc" />
      </g>
    ),
  },
  {
    label: "Copilot",
    art: (
      <g>
        <path d="M8 3h7c2 0 3 2 3 3l-4 1-3 9c-1 2-2 3-4 3H5c-3 0-3-3-2-6l2-7c1-2 2-3 3-3z" fill="#2b78dc" />
        <path d="M8 3h5l-5 9H3l2-6c1-2 2-3 3-3z" fill="#27a3d5" />
        <path d="M3 12h7l-2 7H5c-3 0-3-4-2-7z" fill="#e8c432" />
        <path d="M16 21H9c-1 0-2-1-2-2l3-1 3-9c1-2 2-3 4-3h2c3 0 3 3 2 6l-2 6c-1 2-2 3-3 3z" fill="#a95bd4" />
        <path d="M16 21H9l4-9h8l-2 6c-1 2-2 3-3 3z" fill="#ee6a6a" />
        <path d="M10 15l3-8h2l-3 9z" fill="#fff" />
      </g>
    ),
  },
  {
    label: "Edge",
    art: (
      <g>
        <circle cx="12" cy="12" r="10" fill="#1572c7" />
        <path d="M2 11C3 4 9 1 15 3c6 2 9 8 6 12-2 2-6 1-6-1 2-3-1-6-5-6-4 0-7 1-8 3z" fill="#3ec9a0" />
        <path d="M2 11c1-4 6-7 11-6-5 1-9 8-5 16-4-2-6-6-6-10z" fill="#2597dd" />
        <path d="M10 11c-2 5 3 9 10 6-2 4-7 6-11 4-3-3-3-8 1-10z" fill="#124b98" />
        <path d="M11 10c-2 4 2 8 9 7 1 0 1-1 2-2-2 2-6 1-7-1 1-2-1-4-4-4z" fill="#f2f3f4" />
      </g>
    ),
  },
  {
    label: "Explorateur de fichiers",
    art: (
      <g>
        <path d="M2 4c0-1 1-1 1-1h6l2 2h10v4H2z" fill="#d5a021" />
        <rect x="2" y="6" width="20" height="14" rx="1" fill="#f3cb52" />
        <rect x="5" y="16" width="14" height="5" rx="1" fill="#1f74b8" />
      </g>
    ),
  },
  {
    label: "Chrome",
    art: (
      <g>
        <circle cx="12" cy="12" r="10" fill="#f4c42c" />
        <path d="M12 12L3.300 7a10 10 0 0 0 7.700 15l5-8z" fill="#2a9d52" />
        <path d="M3.300 7A10 10 0 0 1 20.700 7H12L7 14z" fill="#db4437" />
        <circle cx="12" cy="12" r="5" fill="#fff" />
        <circle cx="12" cy="12" r="3.800" fill="#3b78e7" />
      </g>
    ),
  },
  {
    label: "Microsoft Store",
    art: (
      <g>
        <path d="M8 7V3h8v4" fill="none" stroke="#3aa9dc" strokeWidth="1.500" />
        <path d="M2 6h20v13c0 2-1 3-2 3H4c-1 0-2-1-2-3z" fill="#1d4f7d" />
        <path d="M8 10h4v4H8z" fill="#f05a3a" />
        <path d="M12.500 10h4v4h-4z" fill="#83bd40" />
        <path d="M8 14.500h4v4H8z" fill="#41a8e0" />
        <path d="M12.500 14.500h4v4h-4z" fill="#f3c13c" />
      </g>
    ),
  },
  {
    label: "L",
    art: (
      <g>
        <rect x="2" y="2" width="20" height="20" fill="#c9141e" />
        <text x="7" y="17" className="font-['Liberation_Sans',sans-serif] text-[15px] font-bold" fill="#fff">L</text>
      </g>
    ),
  },
  {
    label: "SOLIDWORKS 2024",
    state: "active",
    art: (
      <g>
        <path d="M2 5l10-3 10 3v13l-10 4-10-4z" fill="#6d0d14" />
        <path d="M2 5l10 3v14l-10-4z" fill="#b8121e" />
        <path d="M2 5l10-3 10 3-10 3z" fill="#b8323a" />
        <path d="M9 17h13v5H9z" fill="#1b1b1b" />
        <text x="3" y="16" className="font-['Liberation_Sans',sans-serif] text-[10px] font-bold" fill="#fff">S</text>
        <text x="12" y="16" className="font-['Liberation_Sans',sans-serif] text-[10px] font-bold" fill="#fff">W</text>
        <text x="10" y="22" className="font-['Liberation_Sans',sans-serif] text-[5px] font-bold" fill="#fff">2024</text>
      </g>
    ),
  },
  {
    label: "OBS Studio",
    state: "open",
    art: (
      <g>
        <circle cx="11" cy="12" r="9" fill="#202124" />
        <path d="M11 5c4 1 4 6 0 7-4 0-6 5-2 7M11 12c3 1 5 4 7 1M10 12C6 11 5 8 6 6" fill="none" stroke="#dedede" strokeWidth="1.300" />
        <circle cx="18" cy="5" r="5" fill="#e0101b" />
      </g>
    ),
  },
  {
    label: "Photos",
    state: "open",
    art: (
      <g>
        <rect x="2" y="3" width="19" height="18" rx="2" fill="#2468b5" />
        <path d="M2 20l9-11 10 11c0 1-1 1-2 1H4c-1 0-2 0-2-1z" fill="#67c3f1" />
        <path d="M7 21l7-6 6 6z" fill="#2f8ad5" />
        <circle cx="17" cy="7" r="1.800" fill="#fff" />
      </g>
    ),
  },
  {
    label: "Calculatrice",
    state: "open",
    art: (
      <g>
        <rect x="4" y="2" width="16" height="20" rx="1" fill="#637380" />
        <path d="M6 4h12v4H6z" fill="#5cc3e3" />
        <path d="M6 10h3v2H6zM10 10h3v2h-3zM14 10h4v2h-4zM6 14h3v2H6zM10 14h3v2h-3zM6 18h3v2H6zM10 18h3v2h-3z" fill="#eef2f4" />
        <path d="M14 14h4v6h-4z" fill="#1d5c9e" />
      </g>
    ),
  },
];

function Taskbar() {
  return (
    <footer className="grid h-[39px] shrink-0 grid-cols-[1fr_auto_1fr] items-center bg-[#ededed] text-[#333]">
      <span />
      <div className="flex items-center pl-1">
        <button aria-label="Démarrer" className="w-[21px]">
          <svg viewBox="0 0 20 20" className="size-5" aria-hidden="true">
            <path d="M0 0h9.500v9.500H0z" fill="#38b4e8" />
            <path d="M10.500 0H20v9.500h-9.500z" fill="#2ba3df" />
            <path d="M0 10.500h9.500V20H0z" fill="#1f93d6" />
            <path d="M10.500 10.500H20V20h-9.500z" fill="#1680c6" />
          </svg>
        </button>
        <label className="ml-[11px] flex h-[25px] w-[181px] items-center rounded-full bg-[#fdfdfd] pl-2 shadow-sm">
          <Icon name="search" className="size-[14px]" />
          <input aria-label="Rechercher" placeholder="Rechercher" className="ml-2 min-w-0 flex-1 bg-transparent text-[12px] outline-none placeholder:text-[#555]" />
        </label>
        <div className="ml-2 flex w-[393px] items-center justify-between">
          {apps.map((app) => (
            <button key={app.label} aria-label={app.label} className={`relative flex h-8 items-center justify-center rounded ${app.state === "active" ? "-mx-[3px] w-[30px] bg-[#fafafa]" : "w-6"}`}>
              <svg viewBox="0 0 24 24" className="size-6" aria-hidden="true">
                {app.art}
              </svg>
              {app.state && <span className={`absolute bottom-0 h-[2px] rounded-full ${app.state === "active" ? "w-3 bg-[#2f8b8b]" : "w-[5px] bg-[#888]"}`} />}
            </button>
          ))}
        </div>
      </div>
      <div className="flex items-center justify-end pr-4 text-[10px]">
        <button aria-label="Icônes cachées" className="mr-[14px]">
          <svg viewBox="0 0 10 6" className="h-[6px] w-[10px]" aria-hidden="true">
            <path d="M1 5l4-4 4 4" fill="none" stroke="#333" strokeWidth="1.300" />
          </svg>
        </button>
        <svg viewBox="0 0 16 16" className="mr-[13px] size-[14px]" aria-hidden="true">
          <path d="M4 12h9c3 0 3-4 0-5-1-4-7-4-8-1-4 0-5 5-1 6zM2 2l12 13" fill="none" stroke="#444" strokeWidth="1.300" />
        </svg>
        <svg viewBox="0 0 16 16" className="mr-4 size-[14px]" aria-hidden="true">
          <rect x="5.500" y="1" width="5" height="9" rx="2.500" fill="#9ccbd0" stroke="#397c84" />
          <path d="M3 7c0 7 10 7 10 0M8 12.500V15" fill="none" stroke="#397c84" strokeWidth="1.200" />
        </svg>
        <button className="mr-4">FRA</button>
        <svg viewBox="0 0 16 16" className="mr-[6px] size-[14px]" aria-hidden="true">
          <g fill="none" stroke="#333">
            <circle cx="7.500" cy="7.500" r="6.500" />
            <path d="M1 7.500h13M7.500 1c-5 4-5 9 0 13M7.500 1c5 4 5 9 0 13M2 4h11" />
          </g>
          <circle cx="12" cy="12" r="3.500" fill="#ededed" stroke="#333" />
          <path d="M9.500 14.500l5-5" stroke="#333" />
        </svg>
        <svg viewBox="0 0 16 16" className="mr-[6px] size-[14px]" aria-hidden="true">
          <path d="M1 6h3l4-3v10l-4-3H1zM10 6c1 1 1 3 0 4M12 4c2 2 2 6 0 8M14 3c2 3 2 7 0 10" fill="none" stroke="#333" strokeWidth="1.100" />
        </svg>
        <svg viewBox="0 0 18 14" className="h-[14px] w-[18px]" aria-hidden="true">
          <rect x="1" y="4" width="14" height="8" rx="2" fill="none" stroke="#222" strokeWidth="1.300" />
          <path d="M3 6h7v4H3zM16 7h1.500v2H16z" fill="#222" />
          <path d="M7 1v2M10 1v2M6 3h5v3l-2.500 2L6 6z" fill="#222" stroke="#222" />
        </svg>
        <button className="ml-[10px] text-right leading-[13px]">
          <span className="block">23:57</span>
          <span className="block">03/01/2026</span>
        </button>
      </div>
    </footer>
  );
}

export default function App() {
  return (
    <div className="flex h-screen flex-col overflow-hidden bg-[#f6f6f6] font-['Lato','Open_Sans',sans-serif]">
      <TitleBar />
      <div className="flex h-[18px] shrink-0 bg-[#f8f8f8]">
        <div className="my-px ml-[3px] w-[29px] border-l border-r border-dotted border-[#777]" />
        <div className="my-px w-7 border-l border-r border-[#999]" />
      </div>
      <RibbonTabs />
      <div className="flex min-h-0 flex-1">
        <FeaturePanel />
        <Viewport />
      </div>
      <BottomTabs />
      <StatusBar />
      <Taskbar />
    </div>
  );
}
